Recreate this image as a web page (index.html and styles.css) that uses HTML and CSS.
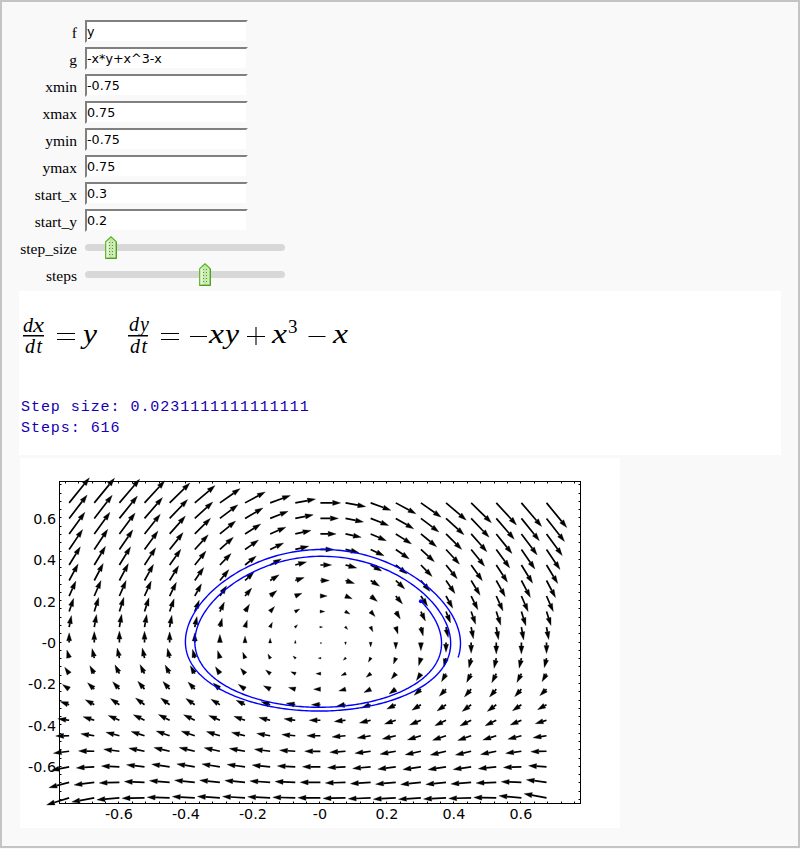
FILE: index.html
```html
<!DOCTYPE html>
<html lang="en">
<head>
<meta charset="utf-8">
<title>Phase plane</title>
<link rel="stylesheet" href="styles.css">
</head>
<body>
<main class="cell">
  <form class="controls">
    <label for="f">f</label><input id="f" value="y">
    <label for="g">g</label><input id="g" value="-x*y+x^3-x">
    <label for="xmin">xmin</label><input id="xmin" value="-0.75">
    <label for="xmax">xmax</label><input id="xmax" value="0.75">
    <label for="ymin">ymin</label><input id="ymin" value="-0.75">
    <label for="ymax">ymax</label><input id="ymax" value="0.75">
    <label for="sx">start_x</label><input id="sx" value="0.3">
    <label for="sy">start_y</label><input id="sy" value="0.2">
    <label>step_size</label>
    <div class="slider"><svg class="thumb thumb-size" width="12" height="23" viewBox="0 0 12 23"><use href="#handle"/></svg></div>
    <label>steps</label>
    <div class="slider"><svg class="thumb thumb-steps" width="12" height="23" viewBox="0 0 12 23"><use href="#handle"/></svg></div>
  </form>
  <svg class="defs" width="0" height="0">
    <defs>
      <linearGradient id="green"><stop offset="0" stop-color="#fff"/><stop offset=".45" stop-color="#c3e5a5"/><stop offset="1" stop-color="#d9f2c5"/></linearGradient>
      <g id="handle">
        <path d="M.7 22.3V5.8L6 .8l5.3 5v16.5z" fill="url(#green)" stroke="#55b51c" stroke-width="1.2"/>
        <path d="M11.3 6v16.3H1.5" fill="none" stroke="#4b9b20"/>
        <path d="M4.5 6v14M7.5 6v14" stroke="#4f9a2c" stroke-dasharray="1 2"/>
      </g>
    </defs>
  </svg>
  <section class="output">
    <svg class="math" width="340" height="60" viewBox="20 305 340 60">
      <g class="small">
        <text x="23" y="332" textLength="10" lengthAdjust="spacingAndGlyphs">d</text><text x="33" y="332" textLength="11" lengthAdjust="spacingAndGlyphs">x</text>
        <text x="25" y="353" textLength="17">dt</text>
        <text x="129" y="331" textLength="20">dy</text><text x="130" y="353" textLength="17">dt</text>
      </g>
      <path d="M23 335.7h21M128 335.7h20" stroke="#000" stroke-width="1.6"/>
      <path d="M57 333.5h18M57 339.500h18M161 333.500h18M161 339.500h18M190 336.500h17M247 336.500h18M256 327v18M308.500 336.500h17" stroke="#000" stroke-width="1.1"/>
      <g class="big">
        <text x="83" y="343" textLength="14" lengthAdjust="spacingAndGlyphs">y</text>
        <text x="209" y="343" textLength="15" lengthAdjust="spacingAndGlyphs">x</text>
        <text x="225" y="343" textLength="14" lengthAdjust="spacingAndGlyphs">y</text>
        <text x="272" y="343" textLength="15" lengthAdjust="spacingAndGlyphs">x</text>
        <text x="333" y="343" textLength="15" lengthAdjust="spacingAndGlyphs">x</text>
      </g>
      <text class="sup" x="288" y="333">3</text>
    </svg>
    <pre class="log">Step size: 0.0231111111111111
Steps: 616</pre>
  </section>
  <svg class="plot" id="plot" width="600" height="370" viewBox="20 458 600 370"></svg>
</main>
<script src="plot.js"></script>
</body>
</html>
```

FILE: styles.css
```css
* { box-sizing: border-box; }
body { margin: 0; background: #f9f9f9; }
.cell { height: 848px; border: 2px solid #c4c4c4; padding: 18px 17px 0; overflow: hidden; }
.controls { display: grid; grid-template-columns: 58px 200px; column-gap: 8px; grid-auto-rows: 27px; }
.controls label { font: 15.5px/25px "Liberation Serif", serif; color: #000; text-align: right; white-space: nowrap; justify-self: end; }
.controls input { width: 163px; height: 23px; margin: 0; padding: 0 0 1px; border: 2px solid #808080; border-right-color: #f9f9f9; border-bottom: 2px solid #f9f9f9; background: #fff; font: 12.700px "DejaVu Sans", sans-serif; color: #000; outline: 0; }
.slider { position: relative; height: 7px; margin-top: 8px; border-radius: 4px; background: #d8d8d8; }
.thumb { position: absolute; top: -8px; display: block; }
.thumb-size { left: 20px; }
.thumb-steps { left: 114px; }
.defs { display: block; }
.output { height: 164px; margin-top: 1px; background: #fff; padding: 14px 1px 0; }
.math { display: block; font-family: "Liberation Serif", serif; }
.small { font-size: 20px; font-style: italic; }
.big { font-size: 28px; font-style: italic; }
.sup { font-size: 19px; }
.log { margin: 32px 0 0 1px; font: 15px/21px "Liberation Mono", monospace; letter-spacing: .95px; color: #1400b0; }
.plot { display: block; margin: 3px 0 0 1px; background: #fff; }
.tick { font: 14.300px "DejaVu Sans", sans-serif; }
.center { text-anchor: middle; }
.right { text-anchor: end; }
```

FILE: plot.js
```js
const svg = document.getElementById('plot');
const X0 = 320.4, Y0 = 642.6, SX = 335, SY = 207;
const px = x => X0 + x * SX, py = y => Y0 - y * SY;
const f = (x, y) => y;
const g = (x, y) => -x * y + x ** 3 - x;
function add(name, attrs, text) {
  const el = document.createElementNS('http://www.w3.org/2000/svg', name);
  for (const k in attrs) el.setAttribute(k, attrs[k]);
  if (text) el.textContent = text;
  svg.appendChild(el);
}

// Direction field
let shafts = '', heads = '';
for (let i = 0; i < 20; i++) for (let j = 0; j < 20; j++) {
  const x = -0.75 + 0.075 * i, y = -0.75 + 0.075 * j;
  const dx = 30 * f(x, y), dy = -30 * g(x, y), len = Math.hypot(dx, dy);
  const a = px(x), b = py(y);
  if (len < 0.05) { heads += `M${a} ${b}h1v1h-1z`; continue; }
  const ux = dx / len, uy = dy / len, h = Math.min(8, len * 0.9 + 0.8), w = h * 0.32;
  const tx = a + dx, ty = b + dy, bx = tx - ux * h, by = ty - uy * h;
  if (len > h) shafts += `M${a} ${b}L${bx} ${by}`;
  heads += `M${tx} ${ty}L${bx - uy * w} ${by + ux * w}L${bx + uy * w} ${by - ux * w}z`;
}
add('path', { d: shafts, stroke: '#000', 'stroke-width': 1.7, fill: 'none' });
add('path', { d: heads, stroke: '#000', 'stroke-width': 0.3 });

// Euler trajectory
let x = 0.3, y = 0.2, d = `M${px(x)} ${py(y)}`;
const step = 0.0231111111111111;
for (let n = 0; n < 616; n++) {
  [x, y] = [x + step * f(x, y), y + step * g(x, y)];
  d += `L${px(x)} ${py(y)}`;
}
add('path', { d, stroke: '#00f', 'stroke-width': 1.4, fill: 'none' });
add('circle', { cx: px(0.3), cy: py(0.2), r: 2, fill: '#00f' });

// Frame, ticks and labels
let ticks = '';
for (let n = -19; n <= 19; n++) {
  const t = Math.round(px(n * 0.04)) - 0.5;
  if (t > 60 && t < 580) ticks += `M${t} 482v1.500M${t} 803v-1.500`;
  const v = Math.round(py(n * 0.04)) - 0.5;
  if (v > 482 && v < 803) ticks += `M60 ${v}h1.500M580 ${v}h-1.500`;
}
add('path', { d: ticks, stroke: '#000' });
add('rect', { x: 59.5, y: 481.5, width: 521, height: 322, fill: 'none', stroke: '#000' });
for (let n = -3; n <= 3; n++) {
  const label = n === 0 ? '-0' : (n * 0.2).toFixed(1);
  add('text', { class: 'tick center', x: px(n * 0.2) - 0.5, y: 819 }, label);
  add('text', { class: 'tick right', x: 56, y: py(n * 0.2) + 5.4 }, label);
}
```
